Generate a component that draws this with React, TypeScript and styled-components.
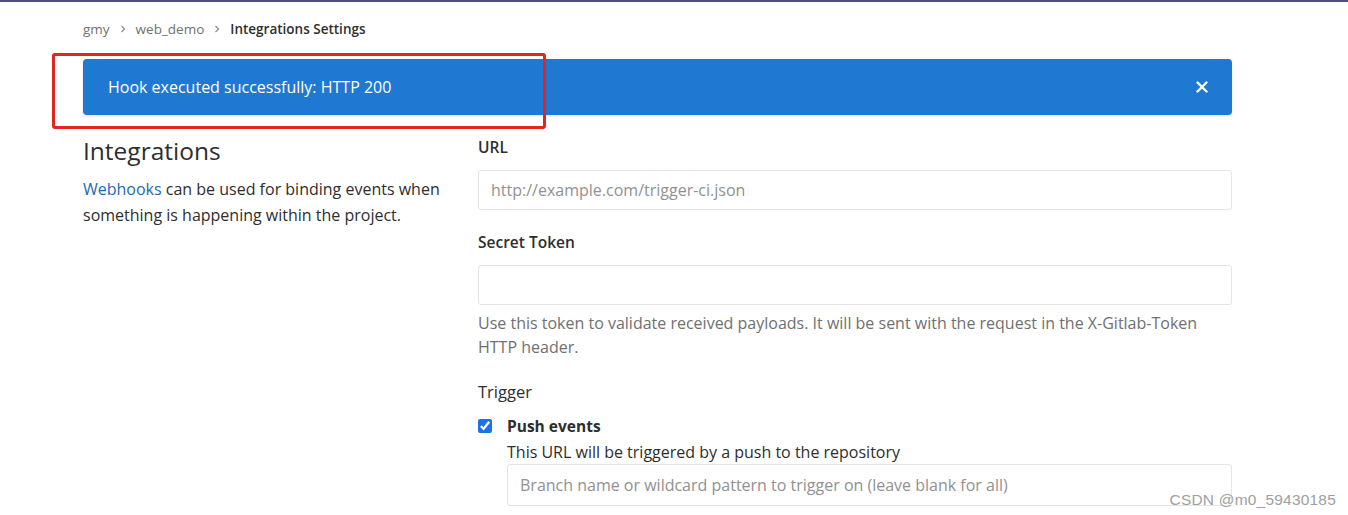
import React from 'react';
import styled, {createGlobalStyle} from 'styled-components';

const GlobalStyle = createGlobalStyle`
    html, body {
        margin: 0;
        padding: 0;
        background: #fff;
    }
    body {
        font-family: "Open Sans", "Noto Sans", "Liberation Sans", sans-serif;
        color: #2e2e2e;
    }
`;

const Page = styled.div`
    width: 1348px;
    height: 515px;
    overflow: hidden;
    border-top: 2px solid #4f4f7e;
    box-sizing: border-box;
    position: relative;
`;

const Content = styled.div`
    padding: 17px 116px 0 83px;
`;

const Crumbs = styled.nav`
    display: flex;
    align-items: center;
    gap: 9px;
    font-size: 13.5px;
    height: 20px;
    color: #707070;
`;

const Crumb = styled.span<{$current?: boolean}>`
    color: ${p => (p.$current ? '#2e2e2e' : '#707070')};
    font-weight: ${p => (p.$current ? 600 : 400)};
`;

const Chevron = styled.svg`
    width: 8px;
    height: 8px;
    color: #8c8c8c;
`;

const AlertWrap = styled.div`
    position: relative;
    margin-top: 20px;
`;

const Alert = styled.div`
    display: flex;
    align-items: center;
    justify-content: space-between;
    height: 56px;
    padding: 0 24px 0 25px;
    background: #1f78d1;
    color: #fff;
    font-size: 16px;
    border-radius: 4px;
    box-shadow: 0 1px 3px rgba(0, 0, 0, 0.12);
`;

const Close = styled.svg`
    width: 12px;
    height: 12px;
`;

const Annotation = styled.div`
    position: absolute;
    left: -31px;
    top: -6px;
    width: 494px;
    height: 76px;
    box-sizing: border-box;
    border: 3px solid #e3251f;
    border-radius: 3px;
    pointer-events: none;
`;

const Columns = styled.div`
    display: grid;
    grid-template-columns: 395px 1fr;
    margin-top: 20px;
`;

const Heading = styled.h2`
    margin: 0;
    font-size: 24.5px;
    font-weight: 400;
    line-height: 32px;
    color: #2e2e2e;
`;

const Intro = styled.p`
    margin: 9px 0 0;
    font-size: 16px;
    line-height: 26px;
    color: #2e2e2e;
`;

const Link = styled.a`
    color: #1b69b6;
    text-decoration: none;
`;

const Form = styled.div`
    display: flex;
    flex-direction: column;
    padding-top: 2px;
`;

const Label = styled.div`
    font-size: 15.5px;
    font-weight: 600;
    line-height: 20px;
    margin-bottom: 13px;
`;

const Field = styled.div<{$gap: number}>`
    margin-bottom: ${p => p.$gap}px;
`;

const Input = styled.input<{$tall?: boolean}>`
    display: block;
    width: 100%;
    box-sizing: border-box;
    height: ${p => (p.$tall ? 42 : 40)}px;
    padding: 0 12px;
    border: 1px solid #e5e5e5;
    border-radius: 3px;
    background: #fff;
    font-family: inherit;
    font-size: 16px;
    color: #2e2e2e;
    &::placeholder {
        color: #919191;
    }
`;

const Help = styled.div`
    margin-top: 6px;
    font-size: 16px;
    line-height: 24px;
    color: #707070;
`;

const TriggerLabel = styled.div`
    font-size: 16.5px;
    line-height: 20px;
    margin-bottom: 13px;
`;

const CheckRow = styled.div`
    display: grid;
    grid-template-columns: 29px 1fr;
`;

const Check = styled.input`
    margin: 4px 0 0;
    width: 14px;
    height: 14px;
    accent-color: #1a73e8;
`;

const CheckTitle = styled.div`
    font-size: 15.5px;
    font-weight: 700;
    line-height: 22px;
`;

const CheckDesc = styled.div`
    font-size: 16px;
    line-height: 22px;
    margin-top: 4px;
    margin-bottom: 1px;
`;

const Watermark = styled.div`
    position: absolute;
    right: 12px;
    bottom: 6px;
    font-family: "Liberation Sans", sans-serif;
    font-size: 15.5px;
    color: #a0a0a0;
    letter-spacing: 0.2px;
`;

const ChevronIcon = () => (
    <Chevron viewBox="0 0 8 8">
        <path d="M2.5 1 L5.5 4 L2.5 7" fill="none" stroke="currentColor" strokeWidth="1.2" />
    </Chevron>
);

export default function App() {
    return (
        <Page>
            <GlobalStyle />
            <Content>
                <Crumbs>
                    <Crumb>gmy</Crumb>
                    <ChevronIcon />
                    <Crumb>web_demo</Crumb>
                    <ChevronIcon />
                    <Crumb $current>Integrations Settings</Crumb>
                </Crumbs>
                <AlertWrap>
                    <Alert>
                        <span>Hook executed successfully: HTTP 200</span>
                        <Close viewBox="0 0 12 12">
                            <path d="M1.5 1.5 L10.5 10.5 M10.5 1.5 L1.5 10.5" stroke="#fff" strokeWidth="2.4" strokeLinecap="round" />
                        </Close>
                    </Alert>
                    <Annotation />
                </AlertWrap>
                <Columns>
                    <div>
                        <Heading>Integrations</Heading>
                        <Intro>
                            <Link href="#">Webhooks</Link> can be used for binding events when
                            <br />
                            something is happening within the project.
                        </Intro>
                    </div>
                    <Form>
                        <Field $gap={22}>
                            <Label>URL</Label>
                            <Input placeholder="http://example.com/trigger-ci.json" />
                        </Field>
                        <Field $gap={23}>
                            <Label>Secret Token</Label>
                            <Input />
                            <Help>
                                Use this token to validate received payloads. It will be sent with the request in the X-Gitlab-Token
                                <br />
                                HTTP header.
                            </Help>
                        </Field>
                        <TriggerLabel>Trigger</TriggerLabel>
                        <CheckRow>
                            <Check type="checkbox" defaultChecked />
                            <div>
                                <CheckTitle>Push events</CheckTitle>
                                <CheckDesc>This URL will be triggered by a push to the repository</CheckDesc>
                                <Input $tall placeholder="Branch name or wildcard pattern to trigger on (leave blank for all)" />
                            </div>
                        </CheckRow>
                    </Form>
                </Columns>
            </Content>
            <Watermark>CSDN @m0_59430185</Watermark>
        </Page>
    );
}
